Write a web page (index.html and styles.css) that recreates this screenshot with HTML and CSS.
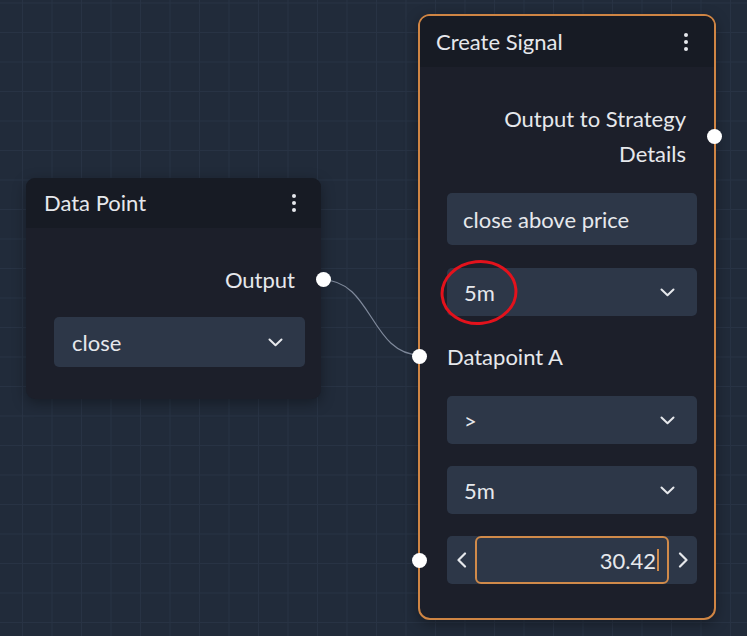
FILE: index.html
```html
<!DOCTYPE html>
<html lang="en">
<head>
<meta charset="utf-8">
<title>Signal Builder</title>
<link rel="stylesheet" href="styles.css">
</head>
<body>
<div class="canvas">
  <svg class="edges" width="747" height="636" viewBox="0 0 747 636">
    <path d="M323 280 C 372 280, 371 355, 420 355" fill="none" stroke="#7f899b" stroke-width="1.2"/>
  </svg>

  <div class="node node-data">
    <div class="node-header">
      <span class="node-title">Data Point</span>
      <span class="kebab"><i></i><i></i><i></i></span>
    </div>
    <div class="node-body">
      <div class="port port-out">Output<span class="handle handle-right"></span></div>
      <div class="select select-lg">
        <span>close</span>
        <svg class="chev" width="15" height="9" viewBox="0 0 15 9"><polyline points="1.5,1.5 7.5,7.2 13.5,1.5" fill="none" stroke="#e6e8ec" stroke-width="2" stroke-linecap="round" stroke-linejoin="round"/></svg>
      </div>
    </div>
  </div>

  <div class="node node-signal">
    <div class="node-header">
      <span class="node-title">Create Signal</span>
      <span class="kebab"><i></i><i></i><i></i></span>
    </div>
    <div class="node-body">
      <div class="port port-out port-multi">Output to Strategy<br>Details<span class="handle handle-right"></span></div>
      <div class="text-input">close above price</div>
      <div class="select nudge">
        <span>5m</span>
        <svg class="chev" width="15" height="9" viewBox="0 0 15 9"><polyline points="1.5,1.5 7.5,7.2 13.5,1.5" fill="none" stroke="#e6e8ec" stroke-width="2" stroke-linecap="round" stroke-linejoin="round"/></svg>
      </div>
      <div class="port port-in nudge">Datapoint A<span class="handle handle-left"></span></div>
      <div class="select">
        <span>&gt;</span>
        <svg class="chev" width="15" height="9" viewBox="0 0 15 9"><polyline points="1.5,1.5 7.5,7.2 13.5,1.5" fill="none" stroke="#e6e8ec" stroke-width="2" stroke-linecap="round" stroke-linejoin="round"/></svg>
      </div>
      <div class="select">
        <span>5m</span>
        <svg class="chev" width="15" height="9" viewBox="0 0 15 9"><polyline points="1.5,1.5 7.5,7.2 13.5,1.5" fill="none" stroke="#e6e8ec" stroke-width="2" stroke-linecap="round" stroke-linejoin="round"/></svg>
      </div>
      <div class="number">
        <span class="handle handle-left"></span>
        <span class="num-btn"><svg width="11" height="16" viewBox="0 0 11 16"><polyline points="9,1.5 2.5,8 9,14.5" fill="none" stroke="#e6e8ec" stroke-width="2.2" stroke-linecap="round" stroke-linejoin="round"/></svg></span>
        <span class="num-input"><span>30.42</span><span class="caret"></span></span>
        <span class="num-btn"><svg width="11" height="16" viewBox="0 0 11 16"><polyline points="2,1.5 8.5,8 2,14.5" fill="none" stroke="#e6e8ec" stroke-width="2.2" stroke-linecap="round" stroke-linejoin="round"/></svg></span>
      </div>
    </div>
  </div>

  <svg class="annotation" width="747" height="636" viewBox="0 0 747 636">
    <ellipse cx="479" cy="292.5" rx="37" ry="31" transform="rotate(-6 479 292.5)" fill="none" stroke="#e3121c" stroke-width="3"/>
  </svg>
</div>
</body>
</html>
```

FILE: styles.css
```css
* { box-sizing: border-box; }

html, body {
  margin: 0;
  padding: 0;
}

body {
  font-family: Lato, "Noto Sans", sans-serif;
  color: #e6e8ec;
  font-size: 22px;
}

.canvas {
  position: relative;
  width: 747px;
  height: 636px;
  overflow: hidden;
  background-color: #212b3a;
  background-image:
    linear-gradient(to right, #283344 1px, transparent 1px),
    linear-gradient(to bottom, #283344 1px, transparent 1px);
  background-size: 29.5px 29.5px;
  background-position: 22px 2.5px;
}

.edges,
.annotation {
  position: absolute;
  left: 0;
  top: 0;
  pointer-events: none;
}

.node {
  position: absolute;
  background: #1c1f2a;
  border-radius: 9px;
  box-shadow: 0 4px 14px rgba(0, 0, 0, 0.35);
}

.node-data {
  left: 26px;
  top: 178px;
  width: 295px;
}

.node-signal {
  left: 418px;
  top: 14px;
  width: 298px;
  border: 2px solid #cf8544;
  border-radius: 12px;
}

.node-header {
  display: flex;
  align-items: center;
  justify-content: space-between;
  height: 50px;
  padding: 0 25px 0 18px;
  background: #171b24;
  border-radius: 9px 9px 0 0;
}

.node-signal .node-header {
  height: 51px;
  padding: 0 26px 0 16px;
}

.node-title {
  font-size: 22px;
  line-height: 1;
}

.kebab {
  display: flex;
  flex-direction: column;
  gap: 3px;
}

.kebab i {
  display: block;
  width: 4px;
  height: 4px;
  border-radius: 50%;
  background: #e6e8ec;
}

.node-body {
  display: flex;
  flex-direction: column;
}

.node-data .node-body {
  padding: 34px 16px 32px 28px;
  gap: 20px;
}

.node-signal .node-body {
  padding: 34px 17px 34px 27px;
  gap: 22px;
}

.nudge {
  margin-top: 1px;
}

.port {
  position: relative;
  line-height: 35px;
}

.port-out {
  text-align: right;
  padding-right: 10px;
}

.port-multi {
  padding-right: 11px;
}

.handle {
  position: absolute;
  top: 50%;
  width: 15px;
  height: 15px;
  margin-top: -7.5px;
  border-radius: 50%;
  background: #ffffff;
}

.node-data .handle-right {
  right: -25.5px;
}

.node-signal .handle-right {
  right: -24.5px;
}

.handle-left {
  left: -35px;
}

.select,
.text-input,
.number {
  background: #2d3748;
  border-radius: 5px;
}

.select {
  display: flex;
  align-items: center;
  justify-content: space-between;
  height: 48px;
  padding: 0 22px 0 17px;
}

.select-lg {
  height: 50px;
  padding-left: 18px;
}

.chev {
  display: block;
}

.text-input {
  display: flex;
  align-items: center;
  height: 52px;
  padding: 0 16px;
}

.number {
  position: relative;
  display: flex;
  align-items: stretch;
  height: 48px;
}

.num-btn {
  width: 28px;
  display: flex;
  align-items: center;
  justify-content: center;
}

.num-input {
  flex: 1;
  display: flex;
  align-items: center;
  justify-content: flex-end;
  padding-right: 8px;
  border: 2px solid #d08a4a;
  border-radius: 6px;
}

.caret {
  display: block;
  width: 2px;
  height: 22px;
  margin-left: 1px;
  background: #d08a4a;
}
```
